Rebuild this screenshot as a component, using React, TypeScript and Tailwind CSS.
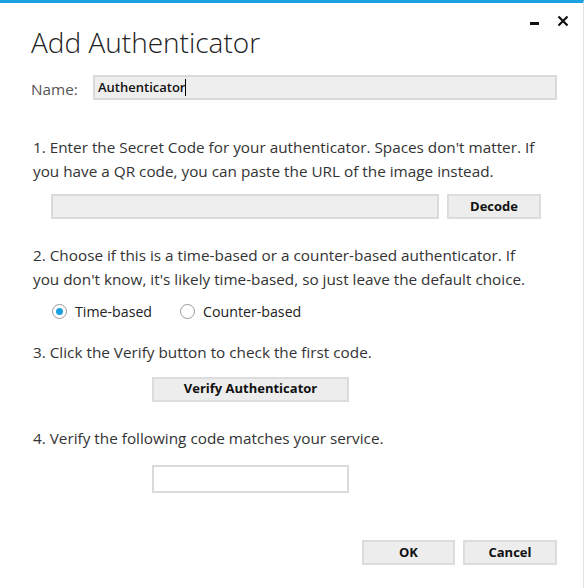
import React from "react";

const font = { fontFamily: '"Open Sans", "Noto Sans", sans-serif' };

function Btn({ children, className }: { children: React.ReactNode; className: string }) {
  return (
    <div
      className={`flex items-center justify-center bg-[#ededed] border-2 border-[#dcdcdc] text-[13px] font-bold text-[#111] ${className}`}
    >
      {children}
    </div>
  );
}

function Radio({ checked, label }: { checked: boolean; label: string }) {
  return (
    <div className="flex items-center">
      <div className="w-[15px] h-[15px] rounded-full border border-[#9a9a9a] bg-white flex items-center justify-center">
        {checked && <div className="w-[7px] h-[7px] rounded-full bg-[#1ba1e2]" />}
      </div>
      <span className="ml-[8px] text-[14.2px] text-[#222]">{label}</span>
    </div>
  );
}

export default function App() {
  return (
    <div
      style={font}
      className="relative w-[584px] h-[588px] bg-white border-t-[3px] border-[#1ba1e2] border-r border-r-[#e2e2e2] text-[#333]"
    >
      <div className="absolute top-[6px] right-[14px] flex items-start gap-[18px] text-black">
        <div className="mt-[13px] w-[9px] h-[3px] bg-[#111]" />
        <svg width="12" height="12" viewBox="0 0 12 12" className="mt-[6px]">
          <path d="M1.5 1.5 L10.5 10.5 M10.5 1.5 L1.5 10.5" stroke="#111" strokeWidth="2.2" />
        </svg>
      </div>

      <div className="pl-[31px] pt-[20px] flex flex-col">
        <h1 className="text-[28px] font-light text-[#222] leading-[38px]">Add Authenticator</h1>

        <div className="flex items-center mt-[13px]">
          <span className="text-[15.3px] text-[#555] w-[62px] mt-[4px]">Name:</span>
          <div className="w-[464px] h-[25px] bg-[#eeeeee] border-2 border-[#dadada] flex items-center pl-[3px]">
            <span className="text-[13px] font-semibold text-[#111]">Authenticator</span>
            <span className="w-px h-[17px] bg-black" />
          </div>
        </div>

        <p className="mt-[34px] pl-[2px] text-[15.3px] leading-[24.5px] text-[#333]">
          1. Enter the Secret Code for your authenticator. Spaces don't matter. If
          <br />
          you have a QR code, you can paste the URL of the image instead.
        </p>

        <div className="flex mt-[10px] ml-[20px]">
          <div className="w-[388px] h-[25px] bg-[#eeeeee] border-2 border-[#dadada]" />
          <Btn className="ml-[8px] w-[94px] h-[25px]">Decode</Btn>
        </div>

        <p className="mt-[24px] pl-[2px] text-[15.3px] leading-[24.5px] text-[#333]">
          2. Choose if this is a time-based or a counter-based authenticator. If
          <br />
          you don't know, it's likely time-based, so just leave the default choice.
        </p>

        <div className="flex mt-[9px] ml-[21px]">
          <Radio checked label="Time-based" />
          <div className="ml-[28px]">
            <Radio checked={false} label="Counter-based" />
          </div>
        </div>

        <p className="mt-[18px] pl-[2px] text-[15.3px] leading-[24.5px] text-[#333]">
          3. Click the Verify button to check the first code.
        </p>

        <Btn className="mt-[12px] ml-[121px] w-[197px] h-[25px]">Verify Authenticator</Btn>

        <p className="mt-[24px] pl-[2px] text-[15.3px] leading-[24.5px] text-[#333]">
          4. Verify the following code matches your service.
        </p>

        <div className="mt-[15px] ml-[121px] w-[197px] h-[28px] bg-white border-2 border-[#dadada]" />

        <div className="flex mt-[47px] ml-[331px]">
          <Btn className="w-[93px] h-[25px]">OK</Btn>
          <Btn className="ml-[8px] w-[94px] h-[25px]">Cancel</Btn>
        </div>
      </div>
    </div>
  );
}
